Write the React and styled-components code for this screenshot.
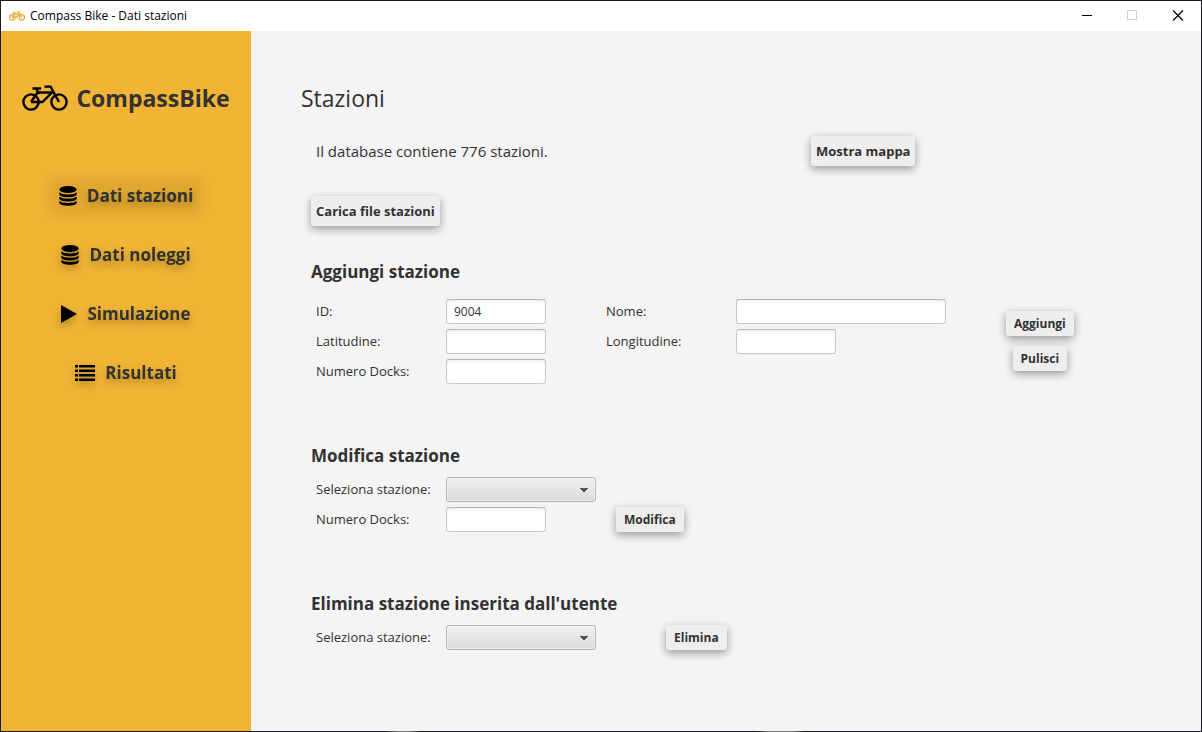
import React from "react";
import styled, { createGlobalStyle, css } from "styled-components";

const GlobalStyle = createGlobalStyle`
  * { box-sizing: border-box; }
  body {
    margin: 0;
    font-family: "Segoe UI", "Open Sans", "Noto Sans", sans-serif;
    color: #323232;
    background: #f4f4f4;
  }
  button, input, select { font-family: inherit; color: inherit; }
`;

const Window = styled.div`
  min-height: 100vh;
  display: flex;
  flex-direction: column;
  border: 1px solid #1b1b20;
  border-bottom: 0;
`;

const TitleBar = styled.header`
  height: 30px;
  display: flex;
  align-items: center;
  background: #ffffff;
  padding: 0 0 1px 8px;
`;

const WindowTitle = styled.span`
  flex: 1;
  margin-left: 5px;
  font-size: 12px;
  line-height: 17px;
  color: #000000;
`;

const CaptionButton = styled.button`
  width: 46px;
  height: 29px;
  padding: 0;
  border: 0;
  background: transparent;
  display: grid;
  place-items: center;
`;

const Body = styled.div`
  flex: 1;
  display: flex;
`;

const Sidebar = styled.aside`
  width: 250px;
  flex: none;
  padding-top: 51px;
  background: #f1b434;
  display: flex;
  flex-direction: column;
  align-items: center;
`;

const Brand = styled.div`
  display: flex;
  align-items: center;
  gap: 8px;
  font-size: 23px;
  line-height: 32px;
  font-weight: 700;
`;

const Nav = styled.nav`
  margin-top: 62px;
  display: flex;
  flex-direction: column;
  align-items: center;
  gap: 20px;
`;

const NavButton = styled.button`
  position: relative;
  isolation: isolate;
  height: 39px;
  padding: 0 10px;
  border: 0;
  display: flex;
  align-items: center;
  gap: 10px;
  background: transparent;
  font-size: 17px;
  line-height: 24px;
  font-weight: 700;
  filter: drop-shadow(0 4px 4px rgba(0, 0, 0, 0.28));
  ${({ $active }) =>
    $active &&
    css`
      filter: none;
      text-shadow: 0 4px 6px rgba(0, 0, 0, 0.2);

      &::before {
        content: "";
        position: absolute;
        inset: 2px 0 0;
        z-index: -1;
        background: rgba(0, 0, 0, 0.07);
        filter: blur(6px);
      }
    `}
`;

const Main = styled.main`
  flex: 1;
  padding: 51px 50px 50px;
  background: #f4f4f4;
`;

const PageTitle = styled.h1`
  margin: 0;
  font-size: 23px;
  line-height: 32px;
  font-weight: 400;
`;

const Content = styled.div`
  padding: 22px 0 0 10px;
`;

const InfoRow = styled.div`
  display: flex;
  align-items: center;
  margin-bottom: 30px;
`;

const Info = styled.p`
  width: 500px;
  margin: 0;
  padding-left: 5px;
  font-size: 15px;
  line-height: 24px;
`;

const ActionButton = styled.button`
  height: ${({ $large }) => ($large ? 30 : 25)}px;
  padding: 0 ${({ $large }) => ($large ? 5 : 8)}px;
  border: 0;
  border-radius: 3px;
  background: #eeeeee;
  box-shadow: 0 3px 9px rgba(0, 0, 0, 0.38);
  font-size: ${({ $large }) => ($large ? 13 : 12)}px;
  font-weight: 700;
  white-space: nowrap;
`;

const Section = styled.section`
  margin-top: ${({ $first }) => ($first ? 33 : 59)}px;
`;

const SectionTitle = styled.h2`
  margin: 0 0 ${({ $spaced }) => ($spaced ? 15 : 9)}px;
  font-size: 17px;
  line-height: 25px;
  font-weight: 700;
`;

const FormRow = styled.form`
  display: flex;
  align-items: ${({ $align }) => $align || "center"};
  gap: ${({ $gap }) => $gap}px;
`;

const Fields = styled.div`
  display: flex;
  flex-direction: column;
  gap: 5px;
  padding-left: 5px;
`;

const Columns = styled.div`
  display: flex;
  align-items: flex-start;
  gap: 55px;
`;

const Field = styled.div`
  display: flex;
  align-items: center;
`;

const Label = styled.label`
  width: 130px;
  font-size: 13px;
  line-height: 19px;
`;

const TextInput = styled.input`
  width: ${({ $wide }) => ($wide ? 210 : 100)}px;
  height: 25px;
  padding: 0 7px;
  border: 1px solid #c8c8c8;
  border-top-color: #b5b5b5;
  border-radius: 3px;
  background: linear-gradient(#f0f0f0, #ffffff 4px);
  font-size: 12px;
  outline: 0;
`;

const Select = styled.select`
  width: 150px;
  height: 25px;
  padding: 0 8px;
  appearance: none;
  border: 1px solid #b5b5b5;
  border-radius: 3px;
  background:
    linear-gradient(to bottom right, #505050 50%, transparent 51%) 137px 10px / 4px 4px no-repeat,
    linear-gradient(to bottom left, #505050 50%, transparent 51%) 133px 10px / 4px 4px no-repeat,
    linear-gradient(#efefef, #dadada);
  box-shadow: inset 0 0 0 1px rgba(255, 255, 255, 0.5);
`;

const ButtonStack = styled.div`
  display: flex;
  flex-direction: column;
  align-items: center;
  gap: 10px;
  padding-bottom: 1px;
`;

const BottomEdge = styled.div`
  height: 1px;
  background: linear-gradient(
    90deg,
    #1b1b20 32%,
    #777777 33%,
    #777777 34%,
    #1b1b20 35%,
    #1b1b20 63%,
    #777777 64%,
    #777777 66%,
    #1b1b20 67%
  );
`;

function BikeIcon({ width, height, color = "#000", stroke = 2.4 }) {
  return (
    <svg width={width} height={height} viewBox="0 0 46 28" fill="none" stroke={color} strokeWidth={stroke} aria-hidden="true">
      <circle cx="9" cy="18" r="7.6" />
      <circle cx="37" cy="18" r="7.6" />
      <path d="M9 18 L15.5 8.5 H30 L20.5 18 H9" strokeLinejoin="round" />
      <path d="M17 10 L14.5 5.5 M10.5 4.5 H19" />
      <path d="M37 18 L28.5 2.6 H22.5" strokeLinejoin="round" />
    </svg>
  );
}

function DatabaseIcon() {
  return (
    <svg width="18" height="20" viewBox="0 0 18 20" aria-hidden="true">
      <ellipse cx="9" cy="3.5" rx="8.7" ry="3.5" />
      <path d="M.3 6.2c1.6 1.5 5 2.2 8.7 2.2s7.100-.7 8.700-2.200v2c0 1.700-3.900 3-8.700 3s-8.700-1.300-8.700-3z" />
      <path d="M.3 10.500c1.600 1.500 5 2.200 8.700 2.200s7.100-.7 8.700-2.200v2c0 1.700-3.900 3-8.700 3s-8.700-1.300-8.700-3z" />
      <path d="M.3 14.800c1.600 1.500 5 2.200 8.700 2.200s7.100-.7 8.700-2.200v2c0 1.700-3.900 3-8.700 3s-8.700-1.300-8.700-3z" />
    </svg>
  );
}

function PlayIcon() {
  return (
    <svg width="16" height="18" viewBox="0 0 16 18" aria-hidden="true">
      <path d="M0 0 L16 9 L0 18 Z" />
    </svg>
  );
}

function ListIcon() {
  return (
    <svg width="20" height="16" viewBox="0 0 20 16" aria-hidden="true">
      <path d="M0 0h3v2.500H0z M4 0h16v2.500H4z M0 4.500h3V7H0z M4 4.500h16V7H4z M0 9h3v2.500H0z M4 9h16v2.500H4z M0 13.500h3V16H0z M4 13.500h16V16H4z" />
    </svg>
  );
}

const NAV_ITEMS = [
  { label: "Dati stazioni", Icon: DatabaseIcon, active: true },
  { label: "Dati noleggi", Icon: DatabaseIcon },
  { label: "Simulazione", Icon: PlayIcon },
  { label: "Risultati", Icon: ListIcon },
];

function TextField({ id, label, wide, value = "" }) {
  return (
    <Field>
      <Label htmlFor={id}>{label}</Label>
      <TextInput id={id} type="text" $wide={wide} defaultValue={value} />
    </Field>
  );
}

function SelectField({ id, label }) {
  return (
    <Field>
      <Label htmlFor={id}>{label}</Label>
      <Select id={id} defaultValue="">
        <option value="" />
      </Select>
    </Field>
  );
}

export default function App() {
  return (
    <>
      <GlobalStyle />
      <Window>
        <TitleBar>
          <BikeIcon width={16} height={12} color="#e9b44c" stroke={4.5} />
          <WindowTitle>Compass Bike - Dati stazioni</WindowTitle>
          <CaptionButton type="button" aria-label="Riduci a icona">
            <svg width="12" height="11" viewBox="-1 0 12 11" stroke="#000"><path d="M1 5.500h10" /></svg>
          </CaptionButton>
          <CaptionButton type="button" aria-label="Ingrandisci" disabled>
            <svg width="12" height="11" viewBox="-1 0 12 11" fill="none" stroke="#cccccc"><path d="M.5.5h9v9h-9z" /></svg>
          </CaptionButton>
          <CaptionButton type="button" aria-label="Chiudi">
            <svg width="12" height="11" viewBox="-1 0 12 11" stroke="#000" strokeWidth="1.200"><path d="M0 .5l10 10M10 .5l-10 10" /></svg>
          </CaptionButton>
        </TitleBar>
        <Body>
          <Sidebar>
            <Brand>
              <BikeIcon width={46} height={28} />
              CompassBike
            </Brand>
            <Nav>
              {NAV_ITEMS.map(({ label, Icon, active }) => (
                <NavButton key={label} type="button" $active={active}>
                  <Icon />
                  {label}
                </NavButton>
              ))}
            </Nav>
          </Sidebar>
          <Main>
            <PageTitle>Stazioni</PageTitle>
            <Content>
              <InfoRow>
                <Info>Il database contiene 776 stazioni.</Info>
                <ActionButton type="button" $large>Mostra mappa</ActionButton>
              </InfoRow>
              <ActionButton type="button" $large>Carica file stazioni</ActionButton>

              <Section $first>
                <SectionTitle $spaced>Aggiungi stazione</SectionTitle>
                <FormRow $gap={60}>
                  <Columns>
                    <Fields>
                      <TextField id="add-id" label="ID:" value="9004" />
                      <TextField id="add-lat" label="Latitudine:" />
                      <TextField id="add-docks" label="Numero Docks:" />
                    </Fields>
                    <Fields>
                      <TextField id="add-name" label="Nome:" wide />
                      <TextField id="add-lon" label="Longitudine:" />
                    </Fields>
                  </Columns>
                  <ButtonStack>
                    <ActionButton type="button">Aggiungi</ActionButton>
                    <ActionButton type="button">Pulisci</ActionButton>
                  </ButtonStack>
                </FormRow>
              </Section>

              <Section>
                <SectionTitle>Modifica stazione</SectionTitle>
                <FormRow $gap={20} $align="flex-end">
                  <Fields>
                    <SelectField id="edit-station" label="Seleziona stazione:" />
                    <TextField id="edit-docks" label="Numero Docks:" />
                  </Fields>
                  <ActionButton type="button">Modifica</ActionButton>
                </FormRow>
              </Section>

              <Section>
                <SectionTitle>Elimina stazione inserita dall'utente</SectionTitle>
                <FormRow $gap={70}>
                  <Fields>
                    <SelectField id="delete-station" label="Seleziona stazione:" />
                  </Fields>
                  <ActionButton type="button">Elimina</ActionButton>
                </FormRow>
              </Section>
            </Content>
          </Main>
        </Body>
        <BottomEdge />
      </Window>
    </>
  );
}
